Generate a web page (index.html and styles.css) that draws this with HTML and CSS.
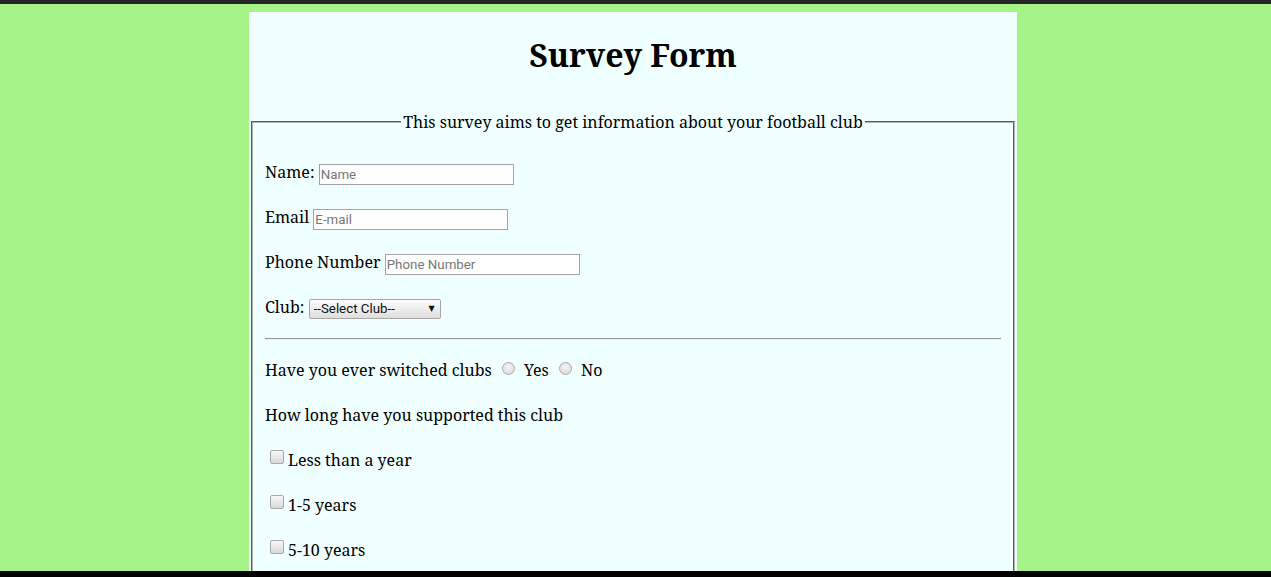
FILE: index.html
```html
<!DOCTYPE html>
<html lang="en">
<head>
<meta charset="utf-8">
<title>Survey Form</title>
<link rel="stylesheet" href="styles.css">
</head>
<body>
<div class="topbar"></div>
<main class="page">
  <h1 class="title">Survey Form</h1>
  <form class="survey">
    <fieldset class="box">
      <legend class="box-legend">This survey aims to get information about your football club</legend>
      <div class="group group-first">
        <p class="row"><label for="name">Name:</label> <input class="text-input" id="name" type="text" placeholder="Name"></p>
        <p class="row"><label for="email">Email</label> <input class="text-input" id="email" type="email" placeholder="E-mail"></p>
        <p class="row"><label for="phone">Phone Number</label> <input class="text-input" id="phone" type="tel" placeholder="Phone Number"></p>
        <p class="row"><label for="club">Club:</label> <span class="select-wrap"><select class="select" id="club"><option>--Select Club--</option></select></span></p>
      </div>
      <hr class="divider">
      <div class="group">
        <p class="row">Have you ever switched clubs <input class="radio" type="radio" name="switched" id="yes"> <label for="yes">Yes</label> <input class="radio" type="radio" name="switched" id="no"> <label for="no">No</label></p>
        <p class="row">How long have you supported this club</p>
        <p class="row"><input class="check" type="checkbox" id="c1"><label for="c1">Less than a year</label></p>
        <p class="row"><input class="check" type="checkbox" id="c2"><label for="c2">1-5 years</label></p>
        <p class="row"><input class="check" type="checkbox" id="c3"><label for="c3">5-10 years</label></p>
      </div>
    </fieldset>
  </form>
</main>
<div class="bottombar"></div>
</body>
</html>
```
FILE: styles.css
```css
html {
  overflow: hidden;
}
body {
  margin: 0;
  background: #a6f388;
  font-family: "Noto Serif", "DejaVu Serif", serif;
  font-size: 16px;
  color: #000;
}
.topbar {
  height: 4px;
  background: #232527;
}
.bottombar {
  position: fixed;
  left: 0;
  right: 0;
  bottom: 0;
  height: 6px;
  background: #000;
}
.page {
  width: 768px;
  margin: 8px 0 0 249px;
  background: #f0ffff;
  min-height: 700px;
  overflow: hidden;
}
.title {
  margin: 21px 0 0;
  font-size: 32px;
  line-height: 44px;
  text-align: center;
  font-weight: bold;
}
.survey {
  margin: 34px 0 0;
}
.box {
  margin: 0 2px;
  padding: 0 12px 12px;
  border: 2px groove #b0b0b0;
}
.box-legend {
  margin: 0 auto;
  padding: 0 2px;
  line-height: 22px;
}
.group {
  display: flex;
  flex-direction: column;
  gap: 21px;
}
.group-first {
  margin-top: 27px;
}
.row {
  margin: 0;
  line-height: 24px;
  height: 24px;
}
.text-input {
  box-sizing: border-box;
  width: 195px;
  height: 21px;
  padding: 1px 1px;
  border: 1px solid #a3a3a3;
  background: #fff;
  font-family: Roboto, "Liberation Sans", sans-serif;
  font-size: 13.33px;
  vertical-align: -1px;
}
.text-input::placeholder {
  color: #777;
}
.select-wrap {
  position: relative;
  display: inline-block;
  vertical-align: 0;
}
.select-wrap::after {
  content: "\25BC";
  position: absolute;
  right: 6px;
  top: 4px;
  font-family: "DejaVu Sans", sans-serif;
  font-size: 8px;
  line-height: 12px;
  color: #111;
  pointer-events: none;
}
.select {
  appearance: none;
  -webkit-appearance: none;
  box-sizing: border-box;
  display: block;
  width: 132px;
  height: 20px;
  margin: 0;
  padding: 0 4px;
  border: 1px solid #a6a6a6;
  border-radius: 2px;
  background: linear-gradient(#fcfcfc, #dedede);
  font-family: Roboto, "Liberation Sans", sans-serif;
  font-size: 13.33px;
  color: #111;
}
.divider {
  margin: 19px 0 18px;
  border: 0;
  border-top: 1px solid #999;
  border-bottom: 1px solid #e6eeee;
  height: 0;
}
.radio {
  appearance: none;
  -webkit-appearance: none;
  width: 13px;
  height: 13px;
  margin: 0 5px 0 6px;
  border: 1px solid #aaa;
  border-radius: 50%;
  background: radial-gradient(circle at 50% 35%, #f4f4f4, #d6d6d6);
  vertical-align: 1px;
}
.check {
  appearance: none;
  -webkit-appearance: none;
  width: 14px;
  height: 14px;
  margin: 0 4px 0 5px;
  border: 1px solid #a9a9a9;
  border-radius: 2px;
  background: linear-gradient(#f8f8f8, #d8d8d8);
  vertical-align: 2px;
}
```
